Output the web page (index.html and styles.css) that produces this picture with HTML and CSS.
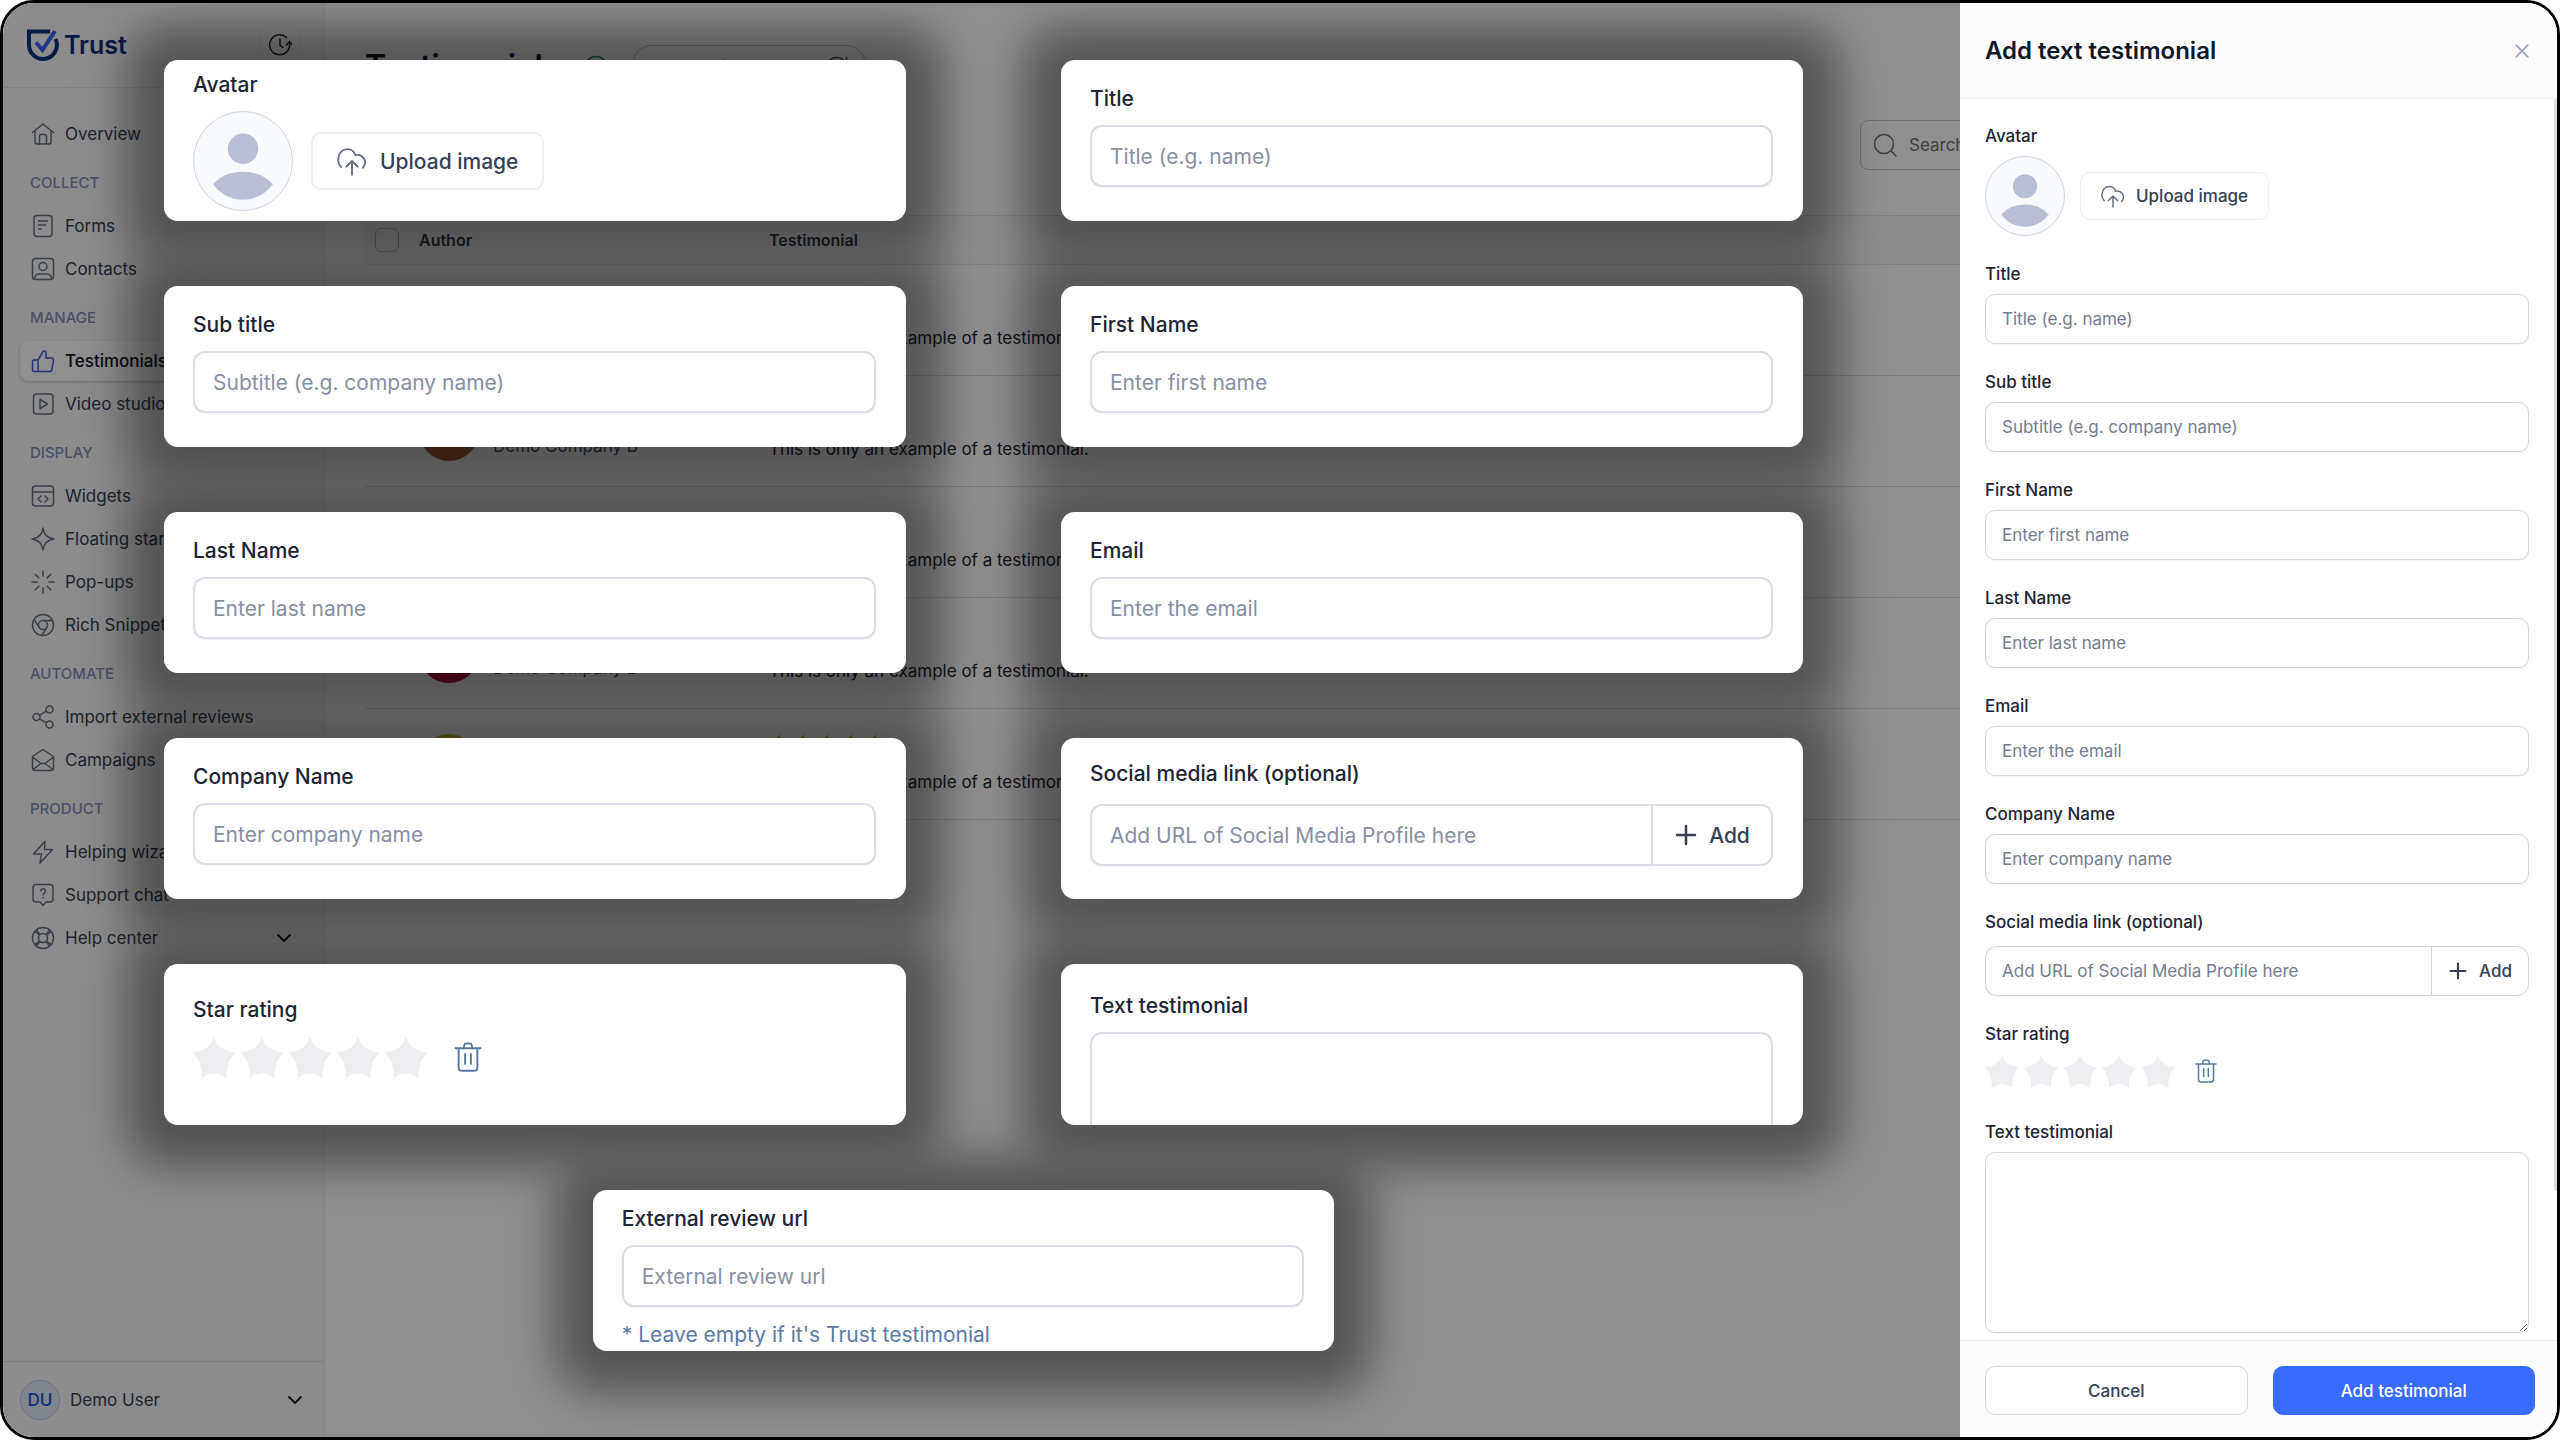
FILE: index.html
```html
<!DOCTYPE html>
<html lang="en">

<head>
  <meta charset="utf-8">
  <title>Testimonials - Trust</title>
  <link rel="stylesheet" href="styles.css">
</head>

<body>
  <!-- icons -->
  <svg class="sprite" aria-hidden="true">
    <symbol id="i-home" viewBox="0 0 24 24"><path d="M1.5 10.5 12 2l10.5 8.5M4 8.8V20a2 2 0 0 0 2 2h12a2 2 0 0 0 2-2V8.8M8.5 22v-8a1.5 1.5 0 0 1 1.5-1.5h4a1.5 1.5 0 0 1 1.5 1.5v8"/></symbol>
    <symbol id="i-form" viewBox="0 0 24 24"><rect x="3" y="1.5" width="18" height="21" rx="3"/><path d="M7.5 7h9M7.5 11h7M7.5 15h3"/></symbol>
    <symbol id="i-contact" viewBox="0 0 24 24"><rect x="1.5" y="1.5" width="21" height="21" rx="3"/><circle cx="12" cy="9.5" r="4"/><path d="M3.5 22c.3-3.500 2-5 5-5h7c3 0 4.700 1.500 5 5"/></symbol>
    <symbol id="i-thumb" viewBox="0 0 24 24"><path d="M7 22.500V11l4.500-7.500c.3-2 3.500-2.500 3.500 1V9h5.500a2 2 0 0 1 2 2.300l-1.500 9a2.500 2.500 0 0 1-2.500 2.200zM7 11H3a1.500 1.500 0 0 0-1.500 1.500V21A1.500 1.500 0 0 0 3 22.500h4"/></symbol>
    <symbol id="i-video" viewBox="0 0 24 24"><rect x="2.5" y="2" width="19.5" height="20" rx="3"/><path d="m9 7.500 7.500 4.500L9 16.500z"/></symbol>
    <symbol id="i-widget" viewBox="0 0 24 24"><rect x="1.5" y="2" width="21" height="20" rx="3"/><path d="M1.5 8h21M10 12l-3 3 3 3M14 12l3 3-3 3"/></symbol>
    <symbol id="i-sparkle" viewBox="0 0 24 24"><path d="M12 1c1 6.500 3.500 9.500 11 11-7.500 1.500-10 4.500-11 11-1-6.500-3.500-9.500-11-11C8.500 10.500 11 7.500 12 1z"/></symbol>
    <symbol id="i-burst" viewBox="0 0 24 24"><path d="M12 1v5M12 18v5M1 12h5M18 12h5M4.200 4.200l3.600 3.600M16.200 16.200l3.600 3.600M4.200 19.800l3.600-3.600M16.200 7.800l3.600-3.600"/></symbol>
    <symbol id="i-chrome" viewBox="0 0 24 24"><circle cx="12" cy="12" r="10.5"/><circle cx="12" cy="12" r="4.5"/><path d="M12 7.500h9.300M8.100 14.200 3.200 6.600M15.900 14.200 11 22.400"/></symbol>
    <symbol id="i-share" viewBox="0 0 24 24"><circle cx="18.5" cy="4.5" r="3.5"/><circle cx="5.5" cy="12" r="3.5"/><circle cx="18.5" cy="19.5" r="3.5"/><path d="m8.500 10.200 7-4M8.500 13.800l7 4"/></symbol>
    <symbol id="i-mail" viewBox="0 0 24 24"><path d="M1.500 8.500 12 1.500l10.500 7V20a2.500 2.500 0 0 1-2.500 2.500H4A2.500 2.500 0 0 1 1.500 20zM1.500 9l8.500 6.500h4L22.500 9M2.200 21.500l7.800-6M21.800 21.500l-7.800-6"/></symbol>
    <symbol id="i-bolt" viewBox="0 0 24 24"><path d="M14 1.500 2.500 14h8l-1.500 9L21.500 9.500h-8z"/></symbol>
    <symbol id="i-chat" viewBox="0 0 24 24"><path d="M5 1.500h14a3 3 0 0 1 3 3V16a3 3 0 0 1-3 3h-4l-3 3.500L9 19H5a3 3 0 0 1-3-3V4.500a3 3 0 0 1 3-3zM9.800 8a2.300 2.300 0 1 1 3.500 2c-.9.600-1.300 1-1.300 2M12 14.500v.6"/></symbol>
    <symbol id="i-help" viewBox="0 0 24 24"><circle cx="12" cy="12" r="10.5"/><circle cx="12" cy="12" r="4.5"/><path d="m4.500 5.800 4 3.200M5.800 4.500 9 8.500M19.500 5.800l-4 3.200M18.200 4.500 15 8.500M4.500 18.200l4-3.200M5.800 19.500 9 15.500M19.500 18.200l-4-3.200M18.200 19.500 15 15.500"/></symbol>
    <symbol id="i-down" viewBox="0 0 24 24"><path d="m6 9 6 6 6-6"/></symbol>
    <symbol id="i-clock" viewBox="0 0 24 24"><path d="M18.500 4.500a10 10 0 1 0 2.700 10.300M12 6v6.500l3 1.800M21.500 8.500v6M18.500 12l3-3.500 2.500 3"/></symbol>
    <symbol id="i-search" viewBox="0 0 24 24"><circle cx="11" cy="11" r="9.5"/><path d="m18 18 5 5"/></symbol>
    <symbol id="i-ring" viewBox="0 0 24 24"><circle cx="12" cy="12" r="10.5"/><path d="m7.500 12 3 3 6-6"/></symbol>
    <symbol id="i-refresh" viewBox="0 0 24 24"><path d="M21.500 12a9.500 9.500 0 1 1-3-7l3 3M21.500 2.500V8H16"/></symbol>
    <symbol id="i-upload" viewBox="0 0 24 24"><path d="M3.200 16.800C1 14.500.5 12 1.200 9.500c.2-4 3.300-7 7-7 3.300 0 5.500 1.800 6.500 4.800 2.500-.6 5 .2 6.500 2.200 2 2.500 1.500 6-.5 8M12 23V12.500M7.500 16.500 12 12l4.500 4.500"/></symbol>
    <symbol id="i-close" viewBox="0 0 24 24"><path d="m5 5 14 14M19 5 5 19"/></symbol>
    <symbol id="i-plus" viewBox="0 0 24 24"><path d="M12 3v18M3 12h18"/></symbol>
    <symbol id="i-trash" viewBox="0 0 24 24"><path d="M2 5h20M4.500 5v15.500a2.500 2.500 0 0 0 2.500 2.500h10a2.500 2.500 0 0 0 2.500-2.500V5M8.500 5l.5-2.500A1.500 1.500 0 0 1 10.500 1.200h3A1.500 1.500 0 0 1 15 2.500l.5 2.500M9.700 9.500v8M14.300 9.500v8"/></symbol>
    <symbol id="i-star" viewBox="0 0 24 24"><path d="M12 0Q13.500 8 24 9.500 18.500 14.500 19.200 24 12 18.500 4.800 24 5.500 14.500 0 9.500 10.500 8 12 0z"/></symbol>
    <symbol id="i-avatar" viewBox="0 0 100 100"><circle cx="50" cy="37.5" r="15.5"/><path d="M19.500 74Q30 61 50 61t30.500 13Q68 89.500 50 89.500T19.500 74z"/></symbol>
  </svg>

  <div class="frame">
    <aside class="sidebar">
      <div class="brand">
        <a class="logo" href="#">
          <svg class="logo-mark" viewBox="0 0 32 32" aria-hidden="true">
            <path class="shield" d="M23 2.500H2v13.500A14 14 0 0 0 16 30a14 14 0 0 0 12.500-20"/>
            <path class="tick" d="M9 13.500 15.500 21 28 2"/>
          </svg>
          Trust
        </a>
        <button class="clock" aria-label="History"><svg class="icon"><use href="#i-clock"/></svg></button>
      </div>
      <nav class="nav">
        <a href="#"><svg class="icon"><use href="#i-home"/></svg>Overview</a>
        <h2>COLLECT</h2>
        <a href="#"><svg class="icon"><use href="#i-form"/></svg>Forms</a>
        <a href="#"><svg class="icon"><use href="#i-contact"/></svg>Contacts</a>
        <h2>MANAGE</h2>
        <a href="#" class="active"><svg class="icon"><use href="#i-thumb"/></svg>Testimonials</a>
        <a href="#"><svg class="icon"><use href="#i-video"/></svg>Video studio</a>
        <h2>DISPLAY</h2>
        <a href="#"><svg class="icon"><use href="#i-widget"/></svg>Widgets</a>
        <a href="#"><svg class="icon"><use href="#i-sparkle"/></svg>Floating stars</a>
        <a href="#"><svg class="icon"><use href="#i-burst"/></svg>Pop-ups</a>
        <a href="#"><svg class="icon"><use href="#i-chrome"/></svg>Rich Snippets</a>
        <h2>AUTOMATE</h2>
        <a href="#"><svg class="icon"><use href="#i-share"/></svg>Import external reviews</a>
        <a href="#"><svg class="icon"><use href="#i-mail"/></svg>Campaigns</a>
        <h2>PRODUCT</h2>
        <a href="#"><svg class="icon"><use href="#i-bolt"/></svg>Helping wizard</a>
        <a href="#"><svg class="icon"><use href="#i-chat"/></svg>Support chat</a>
        <a href="#"><svg class="icon"><use href="#i-help"/></svg>Help center<svg class="icon chevron"><use href="#i-down"/></svg></a>
      </nav>
      <button class="user">
        <span class="initials">DU</span>
        Demo User
        <svg class="icon chevron"><use href="#i-down"/></svg>
      </button>
    </aside>

    <main class="main">
      <header class="page-head">
        <h1>Testimonials</h1>
        <svg class="icon ok"><use href="#i-ring"/></svg>
        <div class="quota">1/37 published <svg class="icon"><use href="#i-refresh"/></svg></div>
      </header>
      <div class="toolbar">
        <label class="search">
          <svg class="icon"><use href="#i-search"/></svg>
          <input type="search" placeholder="Search" aria-label="Search">
        </label>
      </div>
      <table class="list">
        <thead>
          <tr>
            <th class="check"><input type="checkbox" aria-label="Select all"></th>
            <th class="author">Author</th>
            <th>Testimonial</th>
          </tr>
        </thead>
        <tbody>
          <tr>
            <td></td>
            <td><div class="person"><span class="face green"></span><div><b>Demo User</b><br>Demo Company B</div></div></td>
            <td><div class="stars"><svg><use href="#i-star"/></svg><svg><use href="#i-star"/></svg><svg><use href="#i-star"/></svg><svg><use href="#i-star"/></svg><svg><use href="#i-star"/></svg></div>This is only an example of a testimonial.</td>
          </tr>
          <tr>
            <td></td>
            <td><div class="person"><span class="face green"></span><div><b>Demo User</b><br>Demo Company B</div></div></td>
            <td><div class="stars"><svg><use href="#i-star"/></svg><svg><use href="#i-star"/></svg><svg><use href="#i-star"/></svg><svg><use href="#i-star"/></svg><svg><use href="#i-star"/></svg></div>This is only an example of a testimonial.</td>
          </tr>
          <tr>
            <td></td>
            <td><div class="person"><span class="face green"></span><div><b>Demo User</b><br>Demo Company B</div></div></td>
            <td><div class="stars"><svg><use href="#i-star"/></svg><svg><use href="#i-star"/></svg><svg><use href="#i-star"/></svg><svg><use href="#i-star"/></svg><svg><use href="#i-star"/></svg></div>This is only an example of a testimonial.</td>
          </tr>
          <tr>
            <td></td>
            <td><div class="person"><span class="face red"></span><div><b>Demo User</b><br>Demo Company B</div></div></td>
            <td><div class="stars"><svg><use href="#i-star"/></svg><svg><use href="#i-star"/></svg><svg><use href="#i-star"/></svg><svg><use href="#i-star"/></svg><svg><use href="#i-star"/></svg></div>This is only an example of a testimonial.</td>
          </tr>
          <tr>
            <td></td>
            <td><div class="person"><span class="face yellow"></span><div><b>Demo User</b><br>Demo Company B</div></div></td>
            <td><div class="stars"><svg><use href="#i-star"/></svg><svg><use href="#i-star"/></svg><svg><use href="#i-star"/></svg><svg><use href="#i-star"/></svg><svg><use href="#i-star"/></svg></div>This is only an example of a testimonial.</td>
          </tr>
        </tbody>
      </table>
    </main>

    <div class="dim"></div>

    <!-- one shared layer, so overlapping shadows do not add up -->
    <div class="cards glow" aria-hidden="true">
      <i></i><i></i><i></i><i></i><i></i><i></i><i></i><i></i><i></i><i></i><i></i>
    </div>

    <div class="cards">
      <section class="card card-avatar">
        <div class="field">
          <span class="label">Avatar</span>
          <div class="avatar-row">
            <svg class="avatar"><use href="#i-avatar"/></svg>
            <button class="upload"><svg class="icon"><use href="#i-upload"/></svg>Upload image</button>
          </div>
        </div>
      </section>
      <section class="card">
        <div class="field">
          <label class="label" for="c-title">Title</label>
          <input class="input" id="c-title" type="text" placeholder="Title (e.g. name)">
        </div>
      </section>
      <section class="card">
        <div class="field">
          <label class="label" for="c-sub">Sub title</label>
          <input class="input" id="c-sub" type="text" placeholder="Subtitle (e.g. company name)">
        </div>
      </section>
      <section class="card">
        <div class="field">
          <label class="label" for="c-first">First Name</label>
          <input class="input" id="c-first" type="text" placeholder="Enter first name">
        </div>
      </section>
      <section class="card">
        <div class="field">
          <label class="label" for="c-last">Last Name</label>
          <input class="input" id="c-last" type="text" placeholder="Enter last name">
        </div>
      </section>
      <section class="card">
        <div class="field">
          <label class="label" for="c-email">Email</label>
          <input class="input" id="c-email" type="email" placeholder="Enter the email">
        </div>
      </section>
      <section class="card">
        <div class="field">
          <label class="label" for="c-company">Company Name</label>
          <input class="input" id="c-company" type="text" placeholder="Enter company name">
        </div>
      </section>
      <section class="card card-social">
        <div class="field social">
          <label class="label" for="c-social">Social media link (optional)</label>
          <div class="group">
            <input class="input" id="c-social" type="url" placeholder="Add URL of Social Media Profile here">
            <button class="add"><svg class="icon"><use href="#i-plus"/></svg>Add</button>
          </div>
        </div>
      </section>
      <section class="card card-rating">
        <div class="field">
          <span class="label">Star rating</span>
          <div class="rating">
            <label><input type="radio" name="c-stars" aria-label="1 star"><svg><use href="#i-star"/></svg></label>
            <label><input type="radio" name="c-stars" aria-label="2 stars"><svg><use href="#i-star"/></svg></label>
            <label><input type="radio" name="c-stars" aria-label="3 stars"><svg><use href="#i-star"/></svg></label>
            <label><input type="radio" name="c-stars" aria-label="4 stars"><svg><use href="#i-star"/></svg></label>
            <label><input type="radio" name="c-stars" aria-label="5 stars"><svg><use href="#i-star"/></svg></label>
            <button class="trash" aria-label="Clear rating"><svg class="icon"><use href="#i-trash"/></svg></button>
          </div>
        </div>
      </section>
      <section class="card card-text">
        <div class="field">
          <label class="label" for="c-text">Text testimonial</label>
          <textarea class="input" id="c-text"></textarea>
        </div>
      </section>
      <section class="card card-external">
        <div class="field">
          <label class="label" for="c-url">External review url</label>
          <input class="input" id="c-url" type="url" placeholder="External review url">
          <p class="note">* Leave empty if it's Trust testimonial</p>
        </div>
      </section>
    </div>

    <form class="panel">
      <header class="panel-head">
        <h2>Add text testimonial</h2>
        <button type="button" class="close" aria-label="Close"><svg class="icon"><use href="#i-close"/></svg></button>
      </header>
      <div class="panel-body">
        <div class="field">
          <span class="label">Avatar</span>
          <div class="avatar-row">
            <svg class="avatar"><use href="#i-avatar"/></svg>
            <button type="button" class="upload"><svg class="icon"><use href="#i-upload"/></svg>Upload image</button>
          </div>
        </div>
        <div class="field">
          <label class="label" for="title">Title</label>
          <input class="input" id="title" type="text" placeholder="Title (e.g. name)">
        </div>
        <div class="field">
          <label class="label" for="sub">Sub title</label>
          <input class="input" id="sub" type="text" placeholder="Subtitle (e.g. company name)">
        </div>
        <div class="field">
          <label class="label" for="first">First Name</label>
          <input class="input" id="first" type="text" placeholder="Enter first name">
        </div>
        <div class="field">
          <label class="label" for="last">Last Name</label>
          <input class="input" id="last" type="text" placeholder="Enter last name">
        </div>
        <div class="field">
          <label class="label" for="email">Email</label>
          <input class="input" id="email" type="email" placeholder="Enter the email">
        </div>
        <div class="field">
          <label class="label" for="company">Company Name</label>
          <input class="input" id="company" type="text" placeholder="Enter company name">
        </div>
        <div class="field social">
          <label class="label" for="social">Social media link (optional)</label>
          <div class="group">
            <input class="input" id="social" type="url" placeholder="Add URL of Social Media Profile here">
            <button type="button" class="add"><svg class="icon"><use href="#i-plus"/></svg>Add</button>
          </div>
        </div>
        <div class="field">
          <span class="label">Star rating</span>
          <div class="rating">
            <label><input type="radio" name="stars" aria-label="1 star"><svg><use href="#i-star"/></svg></label>
            <label><input type="radio" name="stars" aria-label="2 stars"><svg><use href="#i-star"/></svg></label>
            <label><input type="radio" name="stars" aria-label="3 stars"><svg><use href="#i-star"/></svg></label>
            <label><input type="radio" name="stars" aria-label="4 stars"><svg><use href="#i-star"/></svg></label>
            <label><input type="radio" name="stars" aria-label="5 stars"><svg><use href="#i-star"/></svg></label>
            <button type="button" class="trash" aria-label="Clear rating"><svg class="icon"><use href="#i-trash"/></svg></button>
          </div>
        </div>
        <div class="field">
          <label class="label" for="text">Text testimonial</label>
          <textarea class="input" id="text"></textarea>
        </div>
      </div>
      <footer class="panel-foot">
        <button type="button" class="btn">Cancel</button>
        <button type="submit" class="btn primary">Add testimonial</button>
      </footer>
    </form>
  </div>
</body>

</html>
```
FILE: styles.css
```css
:root {
  --panel: 597px;
  --line: #d0d5dd;
  --ink: #1d2433;
  --text: 17px;
  --label-line: 24px;
  --label-gap: 8px;
  --control: 50px;
  --avatar: 80px;
  --star: 34px;
  --star-gap: 5px;
  --icon: 24px;
}

* {
  box-sizing: border-box;
}

body {
  margin: 0;
  background-color: #fff;
  color: var(--ink);
  font-family: Inter, "Liberation Sans", sans-serif;
  font-size: 17px;
}

h1, h2, p {
  margin: 0;
}

a {
  text-decoration: none;
  color: inherit;
}

button, input, textarea {
  font: inherit;
  color: inherit;
}

button {
  padding: 0;
  border: 0;
  background: none;
  cursor: pointer;
}

.sprite {
  display: none;
}

.icon {
  width: var(--icon);
  height: var(--icon);
  flex: none;
  fill: none;
  stroke: currentColor;
  stroke-width: 1.5;
  stroke-linecap: round;
  stroke-linejoin: round;
}

.frame {
  position: relative;
  display: flex;
  height: 100vh;
  overflow: hidden;
  border: 3px solid #000;
  border-radius: 34px;
  background-color: #fff;
}

/* sidebar */
.sidebar {
  display: flex;
  flex-direction: column;
  flex: none;
  width: 322px;
  border-right: 1px solid #ececef;
  background-color: #fafafa;
}

.brand {
  display: flex;
  align-items: center;
  justify-content: space-between;
  height: 85px;
  padding: 0 24px;
  border-bottom: 1px solid #e6e6ea;
}

.logo {
  display: flex;
  align-items: center;
  gap: 5px;
  color: #0a2f7a;
  font-size: 25px;
  font-weight: 600;
}

.logo-mark {
  width: 32px;
  height: 32px;
  fill: none;
  stroke-width: 4;
}

.shield {
  stroke: #0a2f7a;
}

.tick {
  stroke: #3b62f0;
}

.clock {
  display: flex;
  align-items: center;
  justify-content: center;
  width: 41px;
  height: 41px;
  border: 1px solid #f0f0f2;
  border-radius: 8px;
}

.nav {
  display: flex;
  flex-direction: column;
  flex: 1;
  gap: 3px;
  padding: 26px 17px 0;
  color: #344054;
}

.nav a {
  display: flex;
  align-items: center;
  gap: 10px;
  height: 40px;
  padding: 0 11px;
  border-radius: 8px;
}

.nav .icon {
  color: #667085;
}

.nav h2 {
  padding: 6px 10px 0;
  color: #8690bd;
  font-size: 15px;
  font-weight: 500;
  line-height: 40px;
}

.nav .active {
  background-color: #fff;
  box-shadow: 0 1px 3px #b8bac2;
  color: #101828;
  font-weight: 500;
}

.nav .active .icon {
  color: #3b5bdb;
}

.nav .chevron,
.user .chevron {
  margin-left: auto;
  color: #101828;
  stroke-width: 2;
}

.user {
  display: flex;
  align-items: center;
  gap: 10px;
  height: 76px;
  padding: 0 17px;
  border-top: 1px solid #dddde2;
  color: #344054;
}

.initials {
  width: 40px;
  height: 40px;
  border: 1px solid #b3c4f5;
  border-radius: 50%;
  background-color: #e3ebfc;
  color: #1659c9;
  font-weight: 500;
  line-height: 38px;
}

/* page behind */
.main {
  flex: 1;
  padding: 42px 40px 0;
}

.page-head {
  display: flex;
  align-items: center;
  gap: 24px;
  height: 44px;
}

.page-head h1 {
  color: #101828;
  font-size: 32px;
  font-weight: 600;
  line-height: 44px;
}

.page-head .ok {
  color: #17a34a;
}

.quota {
  display: flex;
  align-items: center;
  justify-content: space-between;
  width: 234px;
  height: 44px;
  padding: 0 16px;
  border: 1px solid #c0c2ca;
  border-radius: 20px;
  color: #475467;
}

.toolbar {
  display: flex;
  padding: 31px 0 45px;
}

.search {
  display: flex;
  align-items: center;
  gap: 10px;
  width: 320px;
  height: 50px;
  margin-left: auto;
  margin-right: 337px;
  padding: 0 12px;
  border: 1px solid #c4c8d2;
  border-radius: 8px;
  color: #667085;
}

.search input {
  width: 100%;
  border: 0;
  outline: 0;
  background: none;
}

.list {
  width: 100%;
  border-collapse: collapse;
  table-layout: fixed;
}

.list th {
  height: 49px;
  padding: 0;
  border-top: 1px solid #e4e4e8;
  border-bottom: 1px solid #e4e4e8;
  background-color: #fafafa;
  color: #344054;
  font-size: 16px;
  font-weight: 600;
  text-align: left;
}

.list td {
  height: 111px;
  padding: 0;
  border-bottom: 1px solid #dcdde2;
  line-height: 24px;
}

.list .check {
  width: 54px;
  padding-left: 10px;
}

.list .author {
  width: 350px;
}

.check input {
  display: block;
  width: 24px;
  height: 24px;
  margin: 0;
  appearance: none;
  border: 1px solid #b6bac4;
  border-radius: 6px;
}

.person {
  display: flex;
  align-items: center;
  gap: 14px;
  color: #475467;
  line-height: 30px;
}

.face {
  width: 60px;
  height: 60px;
  border-radius: 50%;
}

.green {
  background: linear-gradient(#0b6b50 75%, #a8603c 75%);
}

.red {
  background-color: #b8123f;
}

.yellow {
  background-color: #d9c033;
}

.stars {
  display: flex;
  gap: 4px;
  padding-bottom: 16px;
}

.stars svg {
  width: 20px;
  height: 20px;
  fill: #f0a818;
}

.dim {
  position: absolute;
  inset: 0;
  background-color: rgba(0, 0, 0, 0.44);
}

/* enlarged fields over the dimmed page */
.cards {
  --text: 21px;
  --label-line: 28px;
  --label-gap: 12px;
  --control: 62px;
  --avatar: 100px;
  --star: 42px;
  --star-gap: 6px;
  --icon: 30px;
  --line: #d8dce4;
  position: absolute;
  inset: 0 var(--panel) 0 0;
  display: grid;
  grid-template-columns: 1fr 1fr;
  grid-auto-rows: 161px;
  gap: 65px 155px;
  padding: 57px 157px 0 161px;
}

.cards > :last-child {
  grid-column: 1 / -1;
  justify-self: center;
  width: calc(50% - 78px);
  margin-right: 40px;
}

.glow {
  opacity: 0.4;
}

.glow i {
  border-radius: 14px;
  box-shadow: 0 4px 44px 38px #000;
}

.card {
  overflow: hidden;
  padding: 25px 30px 0 29px;
  border-radius: 14px;
  background-color: #fff;
}

.card-avatar {
  padding-top: 11px;
}

.card-social {
  padding-top: 22px;
}

.card-rating {
  padding-top: 32px;
}

.card-text {
  padding-top: 28px;
}

.card-external {
  padding-top: 15px;
}

/* fields */
.field {
  display: flex;
  flex-direction: column;
  flex: none;
  gap: var(--label-gap);
  font-size: var(--text);
}

.label {
  line-height: var(--label-line);
  font-weight: 500;
}

.input {
  width: 100%;
  height: var(--control);
  padding: 0 16px;
  border: 1px solid var(--line);
  border-radius: 10px;
  outline: 0;
  background-color: #fff;
  box-shadow: 0 1px 2px rgba(16, 24, 40, 0.06);
}

.card .input {
  padding: 0 18px;
  border-width: 2px;
  border-radius: 12px;
}

.input::placeholder {
  color: #737c90;
  opacity: 1;
}

.card .input::placeholder {
  color: #868fa3;
}

textarea.input,
.card textarea.input {
  height: 181px;
  padding: 12px;
}

.avatar-row {
  display: flex;
  align-items: center;
  gap: 15px;
}

.avatar {
  flex: none;
  width: var(--avatar);
  height: var(--avatar);
  border: 1px solid #cdd2de;
  border-radius: 50%;
  background-color: #f9fafc;
  fill: #b8bed4;
}

.upload {
  display: flex;
  align-items: center;
  gap: 11px;
  height: 48px;
  padding: 0 20px;
  border: 1px solid #eeeff2;
  border-radius: 10px;
  color: #344054;
  font-weight: 500;
}

.upload .icon {
  color: #667085;
}

.card .avatar-row {
  gap: 18px;
}

.card .upload {
  gap: 13px;
  height: 58px;
  padding: 0 24px;
  border-width: 2px;
}

.social {
  gap: calc(var(--label-gap) + 4px);
}

.group {
  display: flex;
}

.group .input {
  flex: 1;
  min-width: 0;
  border-right: 0;
  border-radius: 12px 0 0 12px;
}

.add {
  display: flex;
  align-items: center;
  justify-content: center;
  gap: 11px;
  width: 98px;
  border: 1px solid var(--line);
  border-radius: 0 12px 12px 0;
  color: #344054;
  font-weight: 500;
}

.add .icon {
  width: 20px;
  height: 20px;
  stroke-width: 2.5;
}

.card .add {
  width: 122px;
  border-width: 2px;
}

.card .add .icon {
  width: 24px;
  height: 24px;
}

.rating {
  display: flex;
  align-items: center;
  gap: var(--star-gap);
  padding-bottom: 6px;
}

.rating label {
  display: flex;
}

.rating input {
  position: absolute;
  opacity: 0;
}

.rating label svg {
  width: var(--star);
  height: var(--star);
  fill: #ededf2;
}

.trash {
  display: flex;
  margin-left: 14px;
  color: #56779f;
}

.card .trash {
  margin-left: 20px;
}

.note {
  color: #5b7aa5;
  line-height: 32px;
}

/* drawer */
.panel {
  position: absolute;
  inset: 0 0 0 auto;
  display: flex;
  flex-direction: column;
  width: var(--panel);
  background-color: #fff;
}

.panel-head {
  display: flex;
  align-items: center;
  justify-content: space-between;
  height: 96px;
  padding: 0 25px;
  border-bottom: 1px solid #ececef;
  background-color: #fcfcfd;
}

.panel-head h2 {
  color: #101828;
  font-size: 24px;
  font-weight: 600;
}

.close {
  display: flex;
  color: #98a2b3;
}

.close .icon {
  width: 20px;
  height: 20px;
  stroke-width: 2;
}

.panel-body {
  position: relative;
  display: flex;
  flex-direction: column;
  flex: 1;
  gap: 26px;
  overflow: hidden;
  padding: 25px 28px 0 25px;
}

/* scrollbar thumb */
.panel-body::after {
  content: "";
  position: absolute;
  top: 0;
  right: 0;
  width: 3px;
  height: 88%;
  border-radius: 2px;
  background-color: #dcdddf;
}

.panel-foot {
  display: grid;
  grid-template-columns: 1fr 1fr;
  gap: 25px;
  padding: 25px 22px 22px 25px;
  border-top: 1px solid #ececef;
  background-color: #fcfcfd;
}

.btn {
  height: 49px;
  border: 1px solid var(--line);
  border-radius: 10px;
  background-color: #fff;
  color: #344054;
  font-weight: 500;
}

.primary {
  border-color: #2f6ff0;
  background-color: #3a6bff;
  color: #fff;
}
```
